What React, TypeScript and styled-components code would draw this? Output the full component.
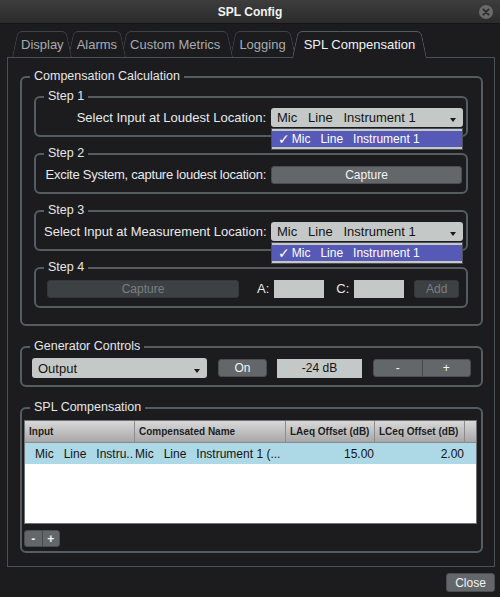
import styled, { createGlobalStyle } from "styled-components";

const Global = createGlobalStyle`
  html, body {
    margin: 0;
    padding: 0;
    background: #1c1c1f;
  }
  body {
    font-family: "Liberation Sans", Arial, sans-serif;
    color: #e6e8e9;
  }
  * { box-sizing: border-box; }
`;

const Window = styled.div`
  width: 500px;
  height: 597px;
  display: flex;
  flex-direction: column;
  background: #1c1c1f;
  overflow: hidden;
`;

const TitleBar = styled.div`
  flex: none;
  height: 24px;
  display: grid;
  grid-template-columns: 1fr auto 1fr;
  align-items: center;
  background: linear-gradient(#3d3d3d, #2b2b2b);
  border-bottom: 1px solid #141414;
`;

const Title = styled.div`
  grid-column: 2;
  font-size: 12px;
  font-weight: bold;
  color: #f2f2f2;
`;

const CloseIcon = styled.svg`
  grid-column: 3;
  justify-self: end;
  margin-right: 7px;
`;

const TabBar = styled.div`
  flex: none;
  position: relative;
  z-index: 1;
  display: flex;
  height: 26px;
  margin-top: 7px;
  padding-left: 12px;
`;

const Tab = styled.div<{ $active?: boolean; $z: number; $pad: string; $ml: number }>`
  position: relative;
  z-index: ${(p) => p.$z};
  height: 26px;
  display: flex;
  align-items: center;
  padding: ${(p) => p.$pad};
  margin-left: ${(p) => p.$ml}px;
  font-size: 13px;
  color: ${(p) => (p.$active ? "#f0f2f3" : "#a6acaf")};
  &::before, &::after {
    content: "";
    position: absolute;
    top: 0;
    bottom: ${(p) => (p.$active ? -1 : 0)}px;
    width: 60%;
    background: #1c1c1f;
    border-top: 1px solid ${(p) => (p.$active ? "#555b60" : "#3f4448")};
    z-index: -1;
  }
  &::before {
    left: 0;
    border-left: 1px solid ${(p) => (p.$active ? "#555b60" : "#3f4448")};
    border-top-left-radius: 5px;
    transform: skewX(-12deg);
    transform-origin: bottom left;
  }
  &::after {
    right: 0;
    border-right: 1px solid ${(p) => (p.$active ? "#555b60" : "#3f4448")};
    border-top-right-radius: 5px;
    transform: skewX(12deg);
    transform-origin: bottom right;
  }
`;

const Pane = styled.div`
  flex: none;
  height: 510px;
  margin: 0 5px 0 7px;
  border: 1px solid #4a5054;
  padding: 11px 11px 0 12px;
  display: flex;
  flex-direction: column;
  gap: 13px;
`;

const Group = styled.fieldset`
  margin: 0;
  padding: 0;
  min-width: 0;
  border: 2px solid #565d62;
  border-radius: 6px;
`;

const Legend = styled.legend`
  margin-left: 8px;
  padding: 0 4px;
  font-size: 12.5px;
  line-height: 15px;
  color: #e4e7e8;
`;

const GroupBody = styled.div<{ $pad: string; $gap?: number }>`
  padding: ${(p) => p.$pad};
  display: flex;
  flex-direction: column;
  gap: ${(p) => p.$gap ?? 0}px;
`;

const StepRow = styled.div`
  display: grid;
  grid-template-columns: minmax(0, 1fr) 192px;
  column-gap: 5px;
  align-items: center;
  height: 19px;
`;

const Label = styled.span<{ $right?: boolean; $tight?: boolean }>`
  font-size: 13px;
  color: #e8eaeb;
  white-space: nowrap;
  text-align: ${(p) => (p.$right ? "right" : "left")};
  letter-spacing: ${(p) => (p.$tight ? "-0.25px" : "normal")};
`;

const Combo = styled.div<{ $w: number; $h: number }>`
  position: relative;
  width: ${(p) => p.$w}px;
  height: ${(p) => p.$h}px;
  display: flex;
  align-items: center;
  padding-left: 6px;
  background: #c4c9c7;
  border-radius: 3px;
  font-size: 13px;
  color: #141414;
  white-space: pre;
  &::after {
    content: "";
    position: absolute;
    right: 7px;
    top: 55%;
    border-left: 3.5px solid transparent;
    border-right: 3.5px solid transparent;
    border-top: 4px solid #1a1a1a;
  }
`;

const Popup = styled.div`
  position: absolute;
  z-index: 5;
  top: calc(100% + 1px);
  left: 0;
  right: 0;
  background: #c4c9c7;
  border: 1px solid #4d5154;
  padding: 2px 0;
`;

const PopupItem = styled.div`
  height: 16px;
  display: flex;
  align-items: center;
  gap: 2px;
  padding-left: 6px;
  background: #5759b6;
  color: #ffffff;
  font-size: 12px;
  white-space: pre;
`;

const Check = styled.span`
  font-family: "DejaVu Sans", sans-serif;
  font-size: 14px;
  line-height: 14px;
`;

const Button = styled.div<{ $w?: number; $h?: number; $disabled?: boolean }>`
  width: ${(p) => (p.$w ? `${p.$w}px` : "auto")};
  height: ${(p) => p.$h ?? 18}px;
  display: flex;
  align-items: center;
  justify-content: center;
  background: ${(p) => (p.$disabled ? "#3e4144" : "#63676a")};
  border: 1px solid ${(p) => (p.$disabled ? "#35383b" : "#4a4e51")};
  border-radius: 3px;
  font-size: 12px;
  color: ${(p) => (p.$disabled ? "#7a7e81" : "#f2f3f3")};
`;

const Step4Row = styled.div`
  display: flex;
  align-items: center;
  height: 19px;
  padding-left: 3px;
`;

const Field = styled.div<{ $w: number; $h?: number }>`
  width: ${(p) => p.$w}px;
  height: ${(p) => p.$h ?? 18}px;
  display: flex;
  align-items: center;
  justify-content: center;
  background: #c4c9c7;
  font-size: 12px;
  color: #141414;
`;

const Spacer = styled.div<{ $w: number }>`
  flex: none;
  width: ${(p) => p.$w}px;
`;

const GenRow = styled.div`
  display: flex;
  align-items: center;
  height: 20px;
`;

const SplitButton = styled.div<{ $w: number; $h: number }>`
  width: ${(p) => p.$w}px;
  height: ${(p) => p.$h}px;
  display: flex;
  background: #63676a;
  border: 1px solid #4a4e51;
  border-radius: 3px;
  overflow: hidden;
`;

const SplitHalf = styled.div<{ $bold?: boolean }>`
  flex: 1;
  display: flex;
  align-items: center;
  justify-content: center;
  font-size: 12px;
  font-weight: ${(p) => (p.$bold ? "bold" : "normal")};
  color: #f2f3f3;
  & + & { border-left: 1px solid #45494c; }
`;

const Table = styled.div`
  width: 453px;
  height: 104px;
  background: #ffffff;
  border: 1px solid #6f7376;
  display: flex;
  flex-direction: column;
  overflow: hidden;
`;

const HeadRow = styled.div`
  display: grid;
  grid-template-columns: 110px 151px 89px 90px 1fr;
  height: 22px;
  flex: none;
  background: linear-gradient(#d8d8d8, #a7a7a7);
  border-bottom: 1px solid #8a8a8a;
`;

const HeadCell = styled.div`
  display: flex;
  align-items: center;
  padding-left: 4px;
  border-right: 1px solid #8c8c8c;
  font-size: 10px;
  font-weight: bold;
  color: #1e1e1e;
  white-space: nowrap;
  overflow: hidden;
  &:last-child { border-right: none; }
`;

const DataRow = styled.div`
  display: grid;
  grid-template-columns: 110px 151px 89px 90px 1fr;
  height: 21px;
  flex: none;
  background: #add8e6;
`;

const Cell = styled.div<{ $align?: "left" | "right"; $pl?: number }>`
  display: flex;
  align-items: center;
  justify-content: ${(p) => (p.$align === "right" ? "flex-end" : "flex-start")};
  padding-left: ${(p) => p.$pl ?? 0}px;
  padding-right: 1px;
  font-size: 12px;
  color: #141414;
  white-space: pre;
  overflow: hidden;
`;

const TableFooter = styled.div`
  margin-top: 6px;
  display: flex;
`;

const Footer = styled.div`
  flex: none;
  display: flex;
  justify-content: flex-end;
  margin-top: 6px;
  padding-right: 5px;
`;

const ITEM = "Mic   Line   Instrument 1";

const TABS = [
  { label: "Display", pad: "0 9px", ml: 0 },
  { label: "Alarms", pad: "0 9px", ml: -5 },
  { label: "Custom Metrics", pad: "0 12px 0 9px", ml: -5 },
  { label: "Logging", pad: "0 10px 0 9px", ml: -2 },
  { label: "SPL Compensation", pad: "0 12px", ml: -4 },
];

function ComboWithPopup() {
  return (
    <Combo $w={192} $h={19}>
      {ITEM}
      <Popup>
        <PopupItem>
          <Check>✓</Check>
          {ITEM}
        </PopupItem>
      </Popup>
    </Combo>
  );
}

export default function App() {
  const last = TABS.length - 1;
  return (
    <>
      <Global />
      <Window>
        <TitleBar>
          <Title>SPL Config</Title>
          <CloseIcon width="14" height="14" viewBox="0 0 14 14">
            <circle cx="7" cy="7" r="7" fill="#6a6a6a" />
            <path d="M4.4 4.4 L9.6 9.6 M9.6 4.4 L4.4 9.6" stroke="#2c2c2c" strokeWidth="1.9" strokeLinecap="round" />
          </CloseIcon>
        </TitleBar>

        <TabBar>
          {TABS.map((t, i) => (
            <Tab key={t.label} $active={i === last} $z={i === last ? 10 : TABS.length - i} $pad={t.pad} $ml={t.ml}>
              {t.label}
            </Tab>
          ))}
        </TabBar>

        <Pane>
          <Group>
            <Legend>Compensation Calculation</Legend>
            <GroupBody $pad="5px 13px 16px 12px" $gap={9}>
              <Group>
                <Legend>Step 1</Legend>
                <GroupBody $pad="4px 3px 8px 8px">
                  <StepRow>
                    <Label $right>Select Input at Loudest Location:</Label>
                    <ComboWithPopup />
                  </StepRow>
                </GroupBody>
              </Group>
              <Group>
                <Legend>Step 2</Legend>
                <GroupBody $pad="4px 3px 8px 8px">
                  <StepRow>
                    <Label $right $tight>Excite System, capture loudest location:</Label>
                    <Button $w={191}>Capture</Button>
                  </StepRow>
                </GroupBody>
              </Group>
              <Group>
                <Legend>Step 3</Legend>
                <GroupBody $pad="4px 3px 8px 8px">
                  <StepRow>
                    <Label $right>Select Input at Measurement Location:</Label>
                    <ComboWithPopup />
                  </StepRow>
                </GroupBody>
              </Group>
              <Group>
                <Legend>Step 4</Legend>
                <GroupBody $pad="4px 3px 8px 8px">
                  <Step4Row>
                    <Button $w={192} $disabled>Capture</Button>
                    <Spacer $w={18} />
                    <Label>A:</Label>
                    <Spacer $w={5} />
                    <Field $w={50} />
                    <Spacer $w={12} />
                    <Label>C:</Label>
                    <Spacer $w={5} />
                    <Field $w={50} />
                    <Spacer $w={10} />
                    <Button $w={45} $disabled>Add</Button>
                  </Step4Row>
                </GroupBody>
              </Group>
            </GroupBody>
          </Group>

          <Group>
            <Legend>Generator Controls</Legend>
            <GroupBody $pad="4px 9px 7px 10px">
              <GenRow>
                <Combo $w={175} $h={20}>Output</Combo>
                <Spacer $w={11} />
                <Button $w={49}>On</Button>
                <Spacer $w={10} />
                <Field $w={85} $h={19}>-24 dB</Field>
                <Spacer $w={11} />
                <SplitButton $w={98} $h={18}>
                  <SplitHalf>-</SplitHalf>
                  <SplitHalf>+</SplitHalf>
                </SplitButton>
              </GenRow>
            </GroupBody>
          </Group>

          <Group>
            <Legend>SPL Compensation</Legend>
            <GroupBody $pad="5px 3px 4px 2px">
              <Table>
                <HeadRow>
                  <HeadCell>Input</HeadCell>
                  <HeadCell>Compensated Name</HeadCell>
                  <HeadCell>LAeq Offset (dB)</HeadCell>
                  <HeadCell>LCeq Offset (dB)</HeadCell>
                  <HeadCell />
                </HeadRow>
                <DataRow>
                  <Cell $pl={10}>Mic   Line   Instru..</Cell>
                  <Cell>Mic   Line   Instrument 1 (...</Cell>
                  <Cell $align="right">15.00</Cell>
                  <Cell $align="right">2.00</Cell>
                  <Cell />
                </DataRow>
              </Table>
              <TableFooter>
                <SplitButton $w={36} $h={17}>
                  <SplitHalf $bold>-</SplitHalf>
                  <SplitHalf $bold>+</SplitHalf>
                </SplitButton>
              </TableFooter>
            </GroupBody>
          </Group>
        </Pane>

        <Footer>
          <Button $w={49} $h={19}>Close</Button>
        </Footer>
      </Window>
    </>
  );
}
